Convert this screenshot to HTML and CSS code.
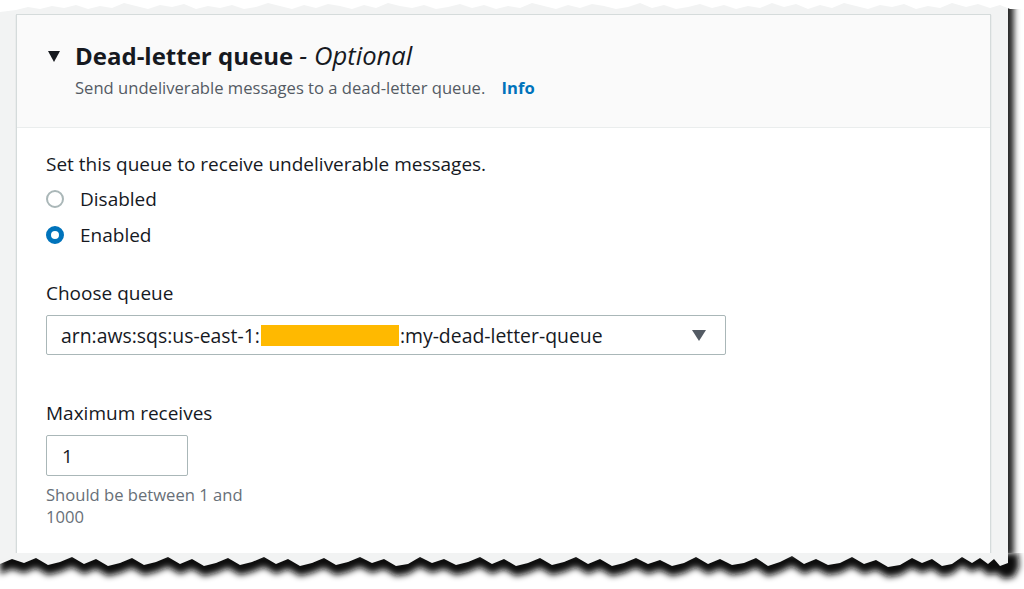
FILE: index.html
```html
<!DOCTYPE html>
<html lang="en">
<head>
<meta charset="utf-8">
<title>Dead-letter queue</title>
<link rel="stylesheet" href="styles.css">
</head>
<body>
<div class="paper">
  <svg class="tear-top" width="1024" height="16" viewBox="0 0 1024 16" aria-hidden="true">
    <polygon fill="#ffffff" points="0,0 1024,0 1024,9 1010,9 1000,5 990,8 978,4 966,7 952,3 940,8 928,6 916,9 904,4 892,7 880,5 868,9 856,6 844,3 832,8 820,5 808,9 796,4 784,7 772,3 760,8 748,6 736,9 724,5 712,8 700,4 688,7 676,9 664,5 652,8 640,3 628,7 616,9 604,6 592,4 580,8 568,5 556,9 544,6 532,3 520,8 508,6 496,9 484,5 472,8 460,4 448,7 436,9 424,5 412,8 400,6 388,3 376,8 364,5 352,9 340,6 328,4 316,8 304,5 292,9 280,6 268,3 256,7 244,9 232,5 220,8 208,6 196,9 184,4 172,7 160,5 148,9 136,6 124,3 112,8 100,6 88,9 76,5 64,8 52,6 40,9 28,7 16,10 0,12"/>
  </svg>
  <section class="card">
    <header class="card-header">
      <div class="title-row">
        <span class="caret"></span>
        <h2 class="title">Dead-letter queue <span class="optional">- Optional</span></h2>
      </div>
      <p class="description">Send undeliverable messages to a dead-letter queue. <a class="info" href="#">Info</a></p>
    </header>
    <div class="card-body">
      <p class="lead">Set this queue to receive undeliverable messages.</p>
      <div class="radio-group">
        <label class="radio"><span class="radio-dot"></span>Disabled</label>
        <label class="radio"><span class="radio-dot checked"></span>Enabled</label>
      </div>
      <div class="field-label field-queue">Choose queue</div>
      <div class="select">
        <span class="select-value">arn:aws:sqs:us-east-1:<span class="redact"></span>:my-dead-letter-queue</span>
        <span class="select-caret"></span>
      </div>
      <div class="field-label field-max">Maximum receives</div>
      <div class="input">1</div>
      <p class="hint">Should be between 1 and 1000</p>
    </div>
  </section>
  <svg class="tear-bottom" width="1024" height="40" viewBox="0 0 1024 40" aria-hidden="true">
    <defs>
      <filter id="blur" x="-5%" y="-50%" width="110%" height="200%">
        <feGaussianBlur stdDeviation="3"/>
      </filter>
    </defs>
    <rect x="0" y="0" width="1024" height="40" fill="#ffffff"/>
    <polygon filter="url(#blur)" fill="#111111" points="0,0 1018,0 1019,14 1014,24 1004,26 996,20 988,22 980,15 972,19 962,13 952,21 942,23 932,16 922,20 912,15 900,22 888,24 876,17 864,21 852,14 840,20 828,22 816,16 804,21 792,13 780,19 768,23 756,15 744,20 732,22 720,16 708,21 696,14 684,20 672,23 660,17 648,21 636,15 624,20 612,23 600,16 588,21 576,14 564,19 552,22 540,15 528,20 516,23 504,16 492,21 480,14 468,19 456,22 444,16 432,20 420,14 408,21 396,23 384,16 372,20 360,14 348,19 336,22 324,15 312,20 300,23 288,16 276,21 264,14 252,19 240,22 228,15 216,20 204,23 192,16 180,21 168,14 156,19 144,22 132,15 120,20 108,23 96,16 84,21 72,14 60,19 48,22 36,15 24,20 12,16 0,21"/>
    <polygon fill="#f2f3f3" points="0,0 1008,0 1008,10 1000,13 994,6 988,11 980,5 972,10 962,4 952,11 942,13 932,6 922,10 912,5 900,12 888,14 876,7 864,11 852,4 840,10 828,12 816,6 804,11 792,3 780,9 768,13 756,5 744,10 732,12 720,6 708,11 696,4 684,10 672,13 660,7 648,11 636,5 624,10 612,13 600,6 588,11 576,4 564,9 552,12 540,5 528,10 516,13 504,6 492,11 480,4 468,9 456,12 444,6 432,10 420,4 408,11 396,13 384,6 372,10 360,4 348,9 336,12 324,5 312,10 300,13 288,6 276,11 264,4 252,9 240,12 228,5 216,10 204,13 192,6 180,11 168,4 156,9 144,12 132,5 120,10 108,13 96,6 84,11 72,4 60,9 48,12 36,5 24,10 12,6 0,11"/>
  </svg>
</div>
</body>
</html>
```

FILE: styles.css
```css
html, body {
  margin: 0;
  padding: 0;
  background: #ffffff;
  width: 1024px;
  height: 589px;
  overflow: hidden;
  font-family: "Open Sans", "Liberation Sans", sans-serif;
  color: #16191f;
}

.paper {
  position: relative;
  width: 1008px;
  height: 556px;
  box-sizing: border-box;
  padding: 14px 0 0 16px;
  background: #f2f3f3;
  box-shadow: 6px 0 6px rgba(0, 0, 0, 0.85);
}

.tear-top {
  position: absolute;
  left: 0;
  top: 0;
}

.tear-bottom {
  position: absolute;
  left: 0;
  top: 553px;
}

.card {
  width: 975px;
  height: 542px;
  box-sizing: border-box;
  background: #ffffff;
  border: 1px solid #d5dbdb;
  box-shadow: 0 1px 1px rgba(0, 28, 36, 0.2);
}

.card-header {
  height: 113px;
  box-sizing: border-box;
  background: #fafafa;
  border-bottom: 1px solid #eaeded;
  padding: 26px 0 0 31px;
}

.title-row {
  display: flex;
  align-items: center;
  gap: 15px;
  height: 30px;
}

.caret {
  width: 0;
  height: 0;
  border-left: 6px solid transparent;
  border-right: 6px solid transparent;
  border-top: 11px solid #16191f;
}

.title {
  margin: 0;
  font-size: 24px;
  line-height: 30px;
  font-weight: 700;
  white-space: nowrap;
}

.optional {
  font-weight: 400;
  font-style: italic;
  font-size: 25.6px;
}

.description {
  margin: 6px 0 0 27px;
  font-size: 16.6px;
  line-height: 22px;
  color: #545b64;
}

.info {
  margin-left: 12px;
  color: #0073bb;
  font-weight: 700;
  text-decoration: none;
}

.card-body {
  padding: 24px 29px 0 29px;
}

.lead {
  margin: 0;
  font-size: 19px;
  line-height: 24px;
}

.radio-group {
  margin-top: 5px;
  display: flex;
  flex-direction: column;
}

.radio {
  display: flex;
  align-items: center;
  gap: 16px;
  height: 36px;
  font-size: 19px;
}

.radio-dot {
  width: 18px;
  height: 18px;
  box-sizing: border-box;
  border-radius: 50%;
  border: 2px solid #aab7b8;
  background: #ffffff;
}

.radio-dot.checked {
  border: 5px solid #0073bb;
}

.field-label {
  font-size: 19px;
  line-height: 24px;
}

.field-queue {
  margin-top: 28px;
}

.field-max {
  margin-top: 46px;
}

.select {
  margin-top: 10px;
  width: 680px;
  height: 40px;
  box-sizing: border-box;
  border: 1px solid #aab7b8;
  border-radius: 2px;
  display: flex;
  align-items: center;
  justify-content: space-between;
  padding: 0 19px 0 14px;
}

.select-value {
  display: flex;
  align-items: center;
  font-size: 19.4px;
}

.redact {
  display: inline-block;
  width: 138px;
  height: 21px;
  background: #ffb900;
  margin: 0 1px;
}

.select-caret {
  width: 0;
  height: 0;
  border-left: 7px solid transparent;
  border-right: 7px solid transparent;
  border-top: 11px solid #545b64;
}

.input {
  margin-top: 10px;
  width: 142px;
  height: 41px;
  box-sizing: border-box;
  border: 1px solid #aab7b8;
  border-radius: 2px;
  padding: 0 15px;
  display: flex;
  align-items: center;
  font-size: 19px;
}

.hint {
  margin: 8px 0 0 0;
  width: 215px;
  font-size: 16.6px;
  line-height: 22px;
  color: #687078;
}
```
